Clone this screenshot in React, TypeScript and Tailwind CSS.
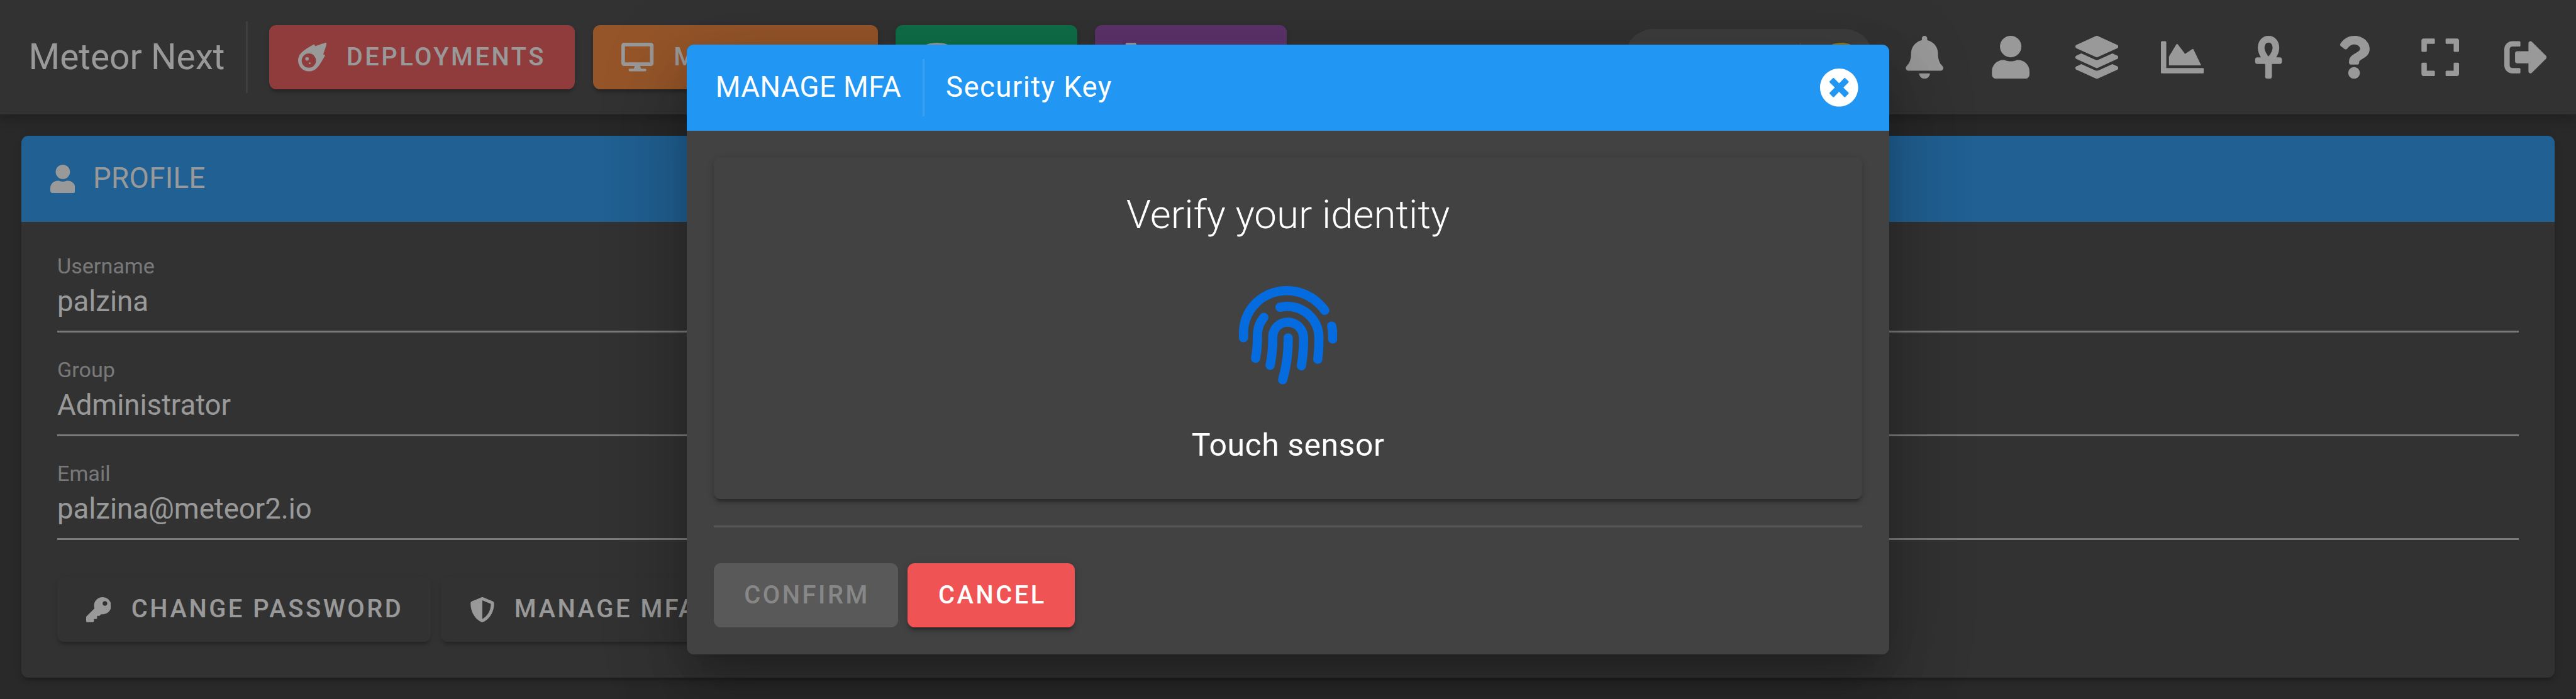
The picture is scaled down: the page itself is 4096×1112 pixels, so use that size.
import React from "react";
import type { IconType } from "react-icons";
import {
  FaAnkh,
  FaBell,
  FaBolt,
  FaChartArea,
  FaCoins,
  FaDatabase,
  FaDesktop,
  FaExpand,
  FaFingerprint,
  FaKey,
  FaLayerGroup,
  FaMeteor,
  FaQuestion,
  FaShieldAlt,
  FaSignOutAlt,
  FaTimesCircle,
  FaUser,
} from "react-icons/fa";

const ELEVATION_2 =
  "shadow-[0_3px_1px_-2px_rgba(0,0,0,0.2),0_2px_2px_0_rgba(0,0,0,0.14),0_1px_5px_0_rgba(0,0,0,0.12)]";
const ELEVATION_4 =
  "shadow-[0_2px_4px_-1px_rgba(0,0,0,0.2),0_4px_5px_0_rgba(0,0,0,0.14),0_1px_10px_0_rgba(0,0,0,0.12)]";
const ELEVATION_24 =
  "shadow-[0_11px_15px_-7px_rgba(0,0,0,0.2),0_24px_38px_3px_rgba(0,0,0,0.14),0_9px_46px_8px_rgba(0,0,0,0.12)]";

const BUTTON =
  "flex h-9 shrink-0 items-center rounded px-4 text-sm font-medium tracking-[0.0892857143em] whitespace-nowrap";

type NavItem = { label: string; icon: IconType; iconWidth: string; tone: string };

const navItems: NavItem[] = [
  { label: "DEPLOYMENTS", icon: FaMeteor, iconWidth: "w-4", tone: "w-[171px] bg-[#ef5354]" },
  { label: "MONITORING", icon: FaDesktop, iconWidth: "w-[18px]", tone: "w-[159.3px] bg-[#fa8131]" },
  { label: "UTILS", icon: FaDatabase, iconWidth: "w-[14px]", tone: "w-[101.3px] bg-[#00b16a]" },
  { label: "CLIENT", icon: FaBolt, iconWidth: "w-[10px]", tone: "w-[107.3px] bg-[#8e44ad]" },
];

const toolbarIcons: { name: string; icon: IconType }[] = [
  { name: "Notifications", icon: FaBell },
  { name: "Profile", icon: FaUser },
  { name: "Layers", icon: FaLayerGroup },
  { name: "Charts", icon: FaChartArea },
  { name: "Admin", icon: FaAnkh },
  { name: "Help", icon: FaQuestion },
  { name: "Fullscreen", icon: FaExpand },
  { name: "Log out", icon: FaSignOutAlt },
];

const fields = [
  { label: "Username", value: "palzina" },
  { label: "Group", value: "Administrator" },
  { label: "Email", value: "palzina@meteor2.io" },
];

function Toolbar() {
  return (
    <header className={`relative flex h-16 items-center bg-[#424242] pr-1 pl-4 ${ELEVATION_4}`}>
      <h1 className="w-[121.6px] text-xl whitespace-nowrap">Meteor Next</h1>
      <div className="h-10 w-px bg-white/12" />
      <nav className="ml-[11.9px] flex gap-[10px]">
        {navItems.map(({ label, icon: Icon, iconWidth, tone }) => (
          <button key={label} className={`${BUTTON} ${ELEVATION_2} ${tone}`}>
            <Icon className={`mr-[11.1px] h-4 shrink-0 ${iconWidth}`} />
            {label}
          </button>
        ))}
      </nav>
      <div className="ml-auto flex h-8 w-[138.5px] items-center justify-end rounded-full bg-[#555] pr-3">
        <div className="mr-3 h-4 w-px bg-white/12" />
        <FaCoins className="size-4 text-[#fabf05]" />
      </div>
      <div className="ml-[5px] flex">
        {toolbarIcons.map(({ name, icon: Icon }) => (
          <button key={name} aria-label={name} className="flex size-12 items-center justify-center">
            <Icon className="size-6" />
          </button>
        ))}
      </div>
    </header>
  );
}

function ProfileCard() {
  return (
    <section className={`mx-3 mt-3 h-[303px] rounded bg-[#424242] ${ELEVATION_2}`}>
      <div className="flex h-12 items-center rounded-t bg-[#2196f3] px-4">
        <FaUser className="mr-[10px] h-4 w-[14px] shrink-0" />
        <h2 className="text-base tracking-[0.15px]">PROFILE</h2>
      </div>
      <div className="px-5 pt-4">
        {fields.map(({ label, value }) => (
          <div key={label} className="mb-3 flex h-[46px] flex-col">
            <span className="mt-[1px] text-xs leading-[16px] text-white/70">{label}</span>
            <span className="mt-[2px] text-base leading-[20px]">{value}</span>
            <div className="mt-auto h-px bg-white/70" />
          </div>
        ))}
        <div className="mt-[21px] flex gap-[5.5px]">
          <button className={`${BUTTON} ${ELEVATION_2} w-[209px]`}>
            <FaKey className="mr-[11.4px] size-3.5 shrink-0" />
            CHANGE PASSWORD
          </button>
          <button className={`${BUTTON} ${ELEVATION_2}`}>
            <FaShieldAlt className="mr-[11px] size-3.5 shrink-0" />
            MANAGE MFA
          </button>
        </div>
      </div>
    </section>
  );
}

function MfaDialog() {
  return (
    <div
      role="dialog"
      className={`flex h-[341px] w-[672px] flex-col overflow-hidden rounded bg-[#424242] ${ELEVATION_24}`}
    >
      <div className="flex h-12 shrink-0 items-center bg-[#2196f3] pr-[17px] pl-4">
        <h2 className="w-[115.8px] text-base tracking-[0.15px]">MANAGE MFA</h2>
        <div className="h-8 w-px bg-white/12" />
        <span className="ml-[12px] text-base tracking-[0.5px]">Security Key</span>
        <FaTimesCircle className="ml-auto size-[22px]" />
      </div>
      <div className="flex flex-col p-[15px]">
        <div className={`flex h-[191px] flex-col items-center rounded pt-[16px] ${ELEVATION_2}`}>
          <p className="text-[22.4px] leading-8 font-light">Verify your identity</p>
          <FaFingerprint className="mt-6 size-[55px] text-[#046cde]" />
          <p className="mt-[22px] text-[17.6px] leading-6 tracking-[0.165px]">Touch sensor</p>
        </div>
        <div className="mt-[15px] h-px bg-white/12" />
        <div className="mt-5 flex gap-[5px]">
          <button className={`${BUTTON} w-[103.2px] bg-white/12 pl-[17px] text-white/30`}>CONFIRM</button>
          <button className={`${BUTTON} ${ELEVATION_2} w-[93.8px] bg-[#ef5354] pl-[17.3px]`}>CANCEL</button>
        </div>
      </div>
    </div>
  );
}

export default function App() {
  return (
    <div className="relative h-[391px] w-[1440px] overflow-hidden bg-[#303030] font-['Roboto',sans-serif] text-white [zoom:2.844444]">
      <Toolbar />
      <ProfileCard />
      <div className="absolute inset-0 bg-[#212121]/46" />
      <div className="absolute inset-0 flex items-start justify-center pt-[25px]">
        <MfaDialog />
      </div>
    </div>
  );
}
